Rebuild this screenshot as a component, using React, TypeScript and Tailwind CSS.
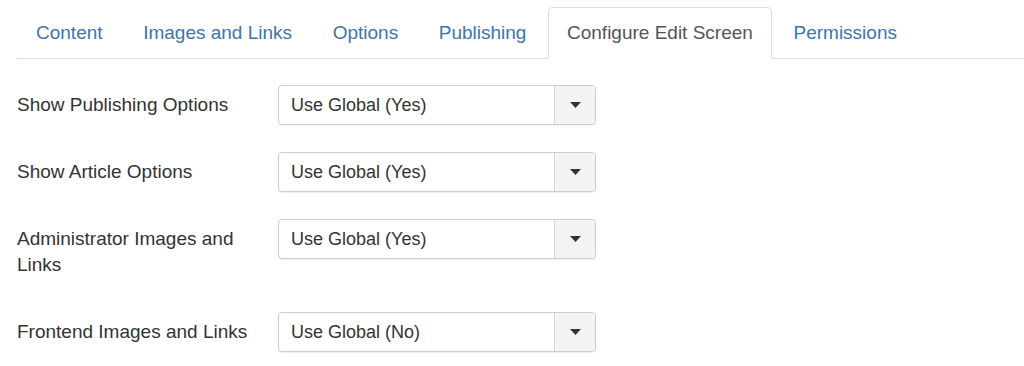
import React from "react";

const tabs = ["Content", "Images and Links", "Options", "Publishing", "Configure Edit Screen", "Permissions"];
const active = "Configure Edit Screen";

const rows: { label: string; value: string }[] = [
  { label: "Show Publishing Options", value: "Use Global (Yes)" },
  { label: "Show Article Options", value: "Use Global (Yes)" },
  { label: "Administrator Images and Links", value: "Use Global (Yes)" },
  { label: "Frontend Images and Links", value: "Use Global (No)" },
];

function Select({ value }: { value: string }) {
  return (
    <div className="flex h-[40px] w-[318px] items-stretch rounded-[4px] border border-[#cccccc] bg-white shadow-[0_1px_1px_rgba(0,0,0,0.06)]">
      <div className="flex flex-1 items-center pl-[12px] text-[18px] text-[#333333]">{value}</div>
      <div className="flex w-[41px] items-center justify-center rounded-r-[4px] border-l border-[#d5d5d5] bg-[#f3f3f3]">
        <svg width="11" height="6" viewBox="0 0 11 6">
          <path d="M0 0 L11 0 L5.5 6 Z" fill="#333333" />
        </svg>
      </div>
    </div>
  );
}

export default function App() {
  return (
    <div className="h-[366px] w-[1024px] bg-white pl-[17px] pt-[7px]" style={{ fontFamily: '"Liberation Sans", Arial, sans-serif' }}>
      <div className="flex border-b border-[#dddddd]">
        {tabs.map((t) => (
          <div
            key={t}
            className={
              t === active
                ? "-mb-px mr-[2.6px] flex h-[52px] items-center rounded-t-[5px] border border-[#dddddd] border-b-white bg-white px-[18px] text-[19px] text-[#555555]"
                : "-mb-px mr-[2.6px] flex h-[52px] items-center border border-transparent px-[18px] text-[19px] text-[#3e74ad]"
            }
          >
            {t}
          </div>
        ))}
      </div>
      <div className="pt-[26px]">
        {rows.map((r) => (
          <div key={r.label} className="mb-[27px] flex">
            <div className="w-[261px] py-[7px] pr-[24px] text-[19px] leading-[26px] text-[#333333]">{r.label}</div>
            <Select value={r.value} />
          </div>
        ))}
      </div>
    </div>
  );
}
